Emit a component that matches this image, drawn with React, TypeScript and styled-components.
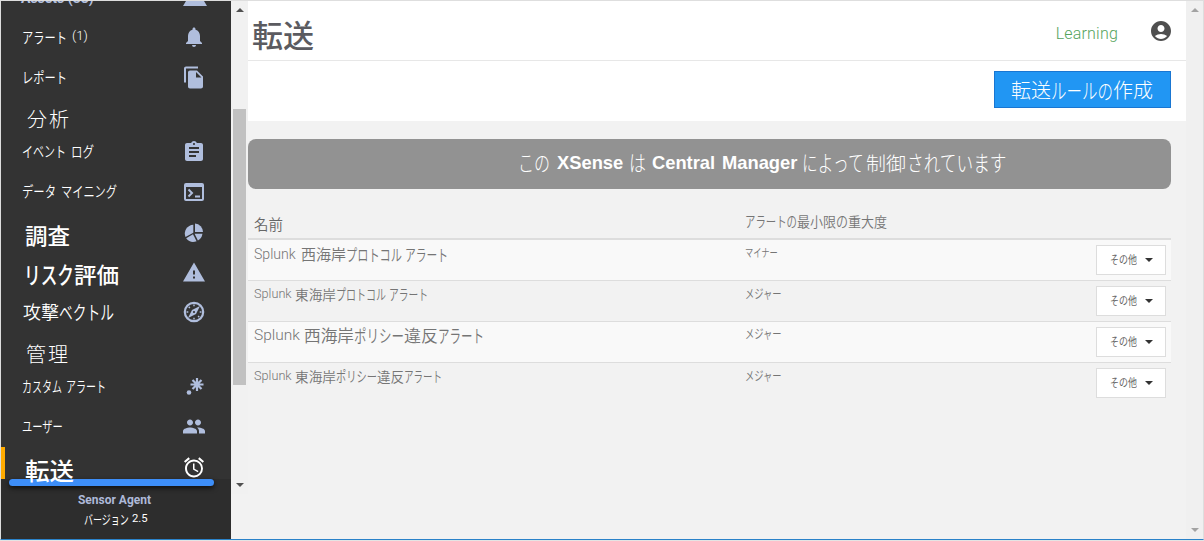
import React from "react";
import styled, { createGlobalStyle } from "styled-components";
import { MdNotifications, MdAssignment, MdWarning, MdPeople, MdAlarm, MdAccountCircle, MdFileCopy } from "react-icons/md";

const Global = createGlobalStyle`
  * { box-sizing: border-box; }
  body { margin: 0; background: #f2f2f2; font-family: "Liberation Sans", "Noto Sans CJK JP", sans-serif; }
`;

const Page = styled.div` height: 541px; padding-bottom: 1px; overflow: hidden; background: #e4e4e4; `;
const Frame = styled.div`
  display: flex; width: 1204px; height: 540px; overflow: hidden;
  border: 1px solid #dedede; border-bottom-color: #2a82c9;
  background: #f2f2f2;
`;

type Run = [text: string, width: number, gap?: number];

const Line = styled.span<{ $size: number; $weight?: number; $color?: string; $x?: number; $y?: number }>`
  display: flex; flex: none; white-space: nowrap;
  font-size: ${p => p.$size}px; line-height: ${p => Math.round(p.$size * 1.3)}px;
  font-weight: ${p => p.$weight ?? 300};
  color: ${p => p.$color ?? "inherit"};
  margin-left: ${p => p.$x ?? 0}px;
  padding-top: ${p => Math.max(0, p.$y ?? 0)}px;
  padding-bottom: ${p => Math.max(0, -(p.$y ?? 0))}px;
`;
const Cjk = styled.span<{ $w: number; $size: number; $count: number; $gap: number }>`
  display: block; width: ${p => p.$w}px; margin-left: ${p => p.$gap}px;
  font-family: "Noto Sans CJK JP", sans-serif; font-size: ${p => p.$size}px;
  transform: scaleX(${p => p.$w / (p.$count * p.$size)}); transform-origin: 0 50%;
`;
const Latin = styled.span<{ $w: number; $gap: number; $strong?: boolean }>`
  display: block; width: ${p => p.$w}px; margin-left: ${p => p.$gap}px; font-size: .94em;
  font-weight: ${p => (p.$strong ? 700 : "inherit")};
  font-family: ${p => (p.$strong ? '"Liberation Sans", sans-serif' : 'Roboto, "Liberation Sans", sans-serif')};
`;

const isLatin = (t: string) => /^[\x20-\x7e]+$/.test(t);
const isKana = (t: string) => /^[\u3040-\u30ff]+$/.test(t);

function Text({ runs, size, weight, color, x, y, strongLatin }: {
  runs: Run[]; size: number; weight?: number; color?: string; x?: number; y?: number; strongLatin?: boolean;
}) {
  return (
    <Line $size={size} $weight={weight} $color={color} $x={x} $y={y}>
      {runs.map(([t, w, gap = 0], i) =>
        isLatin(t)
          ? <Latin key={i} $w={w} $gap={gap} $strong={strongLatin}>{t}</Latin>
          : <Cjk key={i} $w={w} $gap={gap} $count={t.length} $size={isKana(t) ? size * 1.08 : size}>{t}</Cjk>
      )}
    </Line>
  );
}

const Sidebar = styled.aside`
  display: flex; flex-direction: column; width: 230px; background: #333; color: #fff;
`;
const Menu = styled.nav`
  position: relative; z-index: 1; height: 478px; display: flex; flex-direction: column;
`;
const Item = styled.div<{ $gap: number; $active?: boolean }>`
  flex: none; height: ${p => (p.$active ? 32 : 24)}px; margin-top: ${p => p.$gap}px;
  padding: 0 25px 0 ${p => (p.$active ? 17 : 21)}px;
  border-left: ${p => (p.$active ? "4px solid #ffab00" : "none")};
  display: flex; align-items: center; justify-content: space-between;
`;
const IconBox = styled.span<{ $active?: boolean }>`
  display: flex; width: 24px; height: 24px; align-items: center; justify-content: center;
  color: ${p => (p.$active ? "#fff" : "#b0bedd")};
  margin-top: ${p => (p.$active ? 8 : 0)}px;
`;
const Clipped = styled.div`
  flex: none; height: 5px; display: flex; align-items: flex-end; justify-content: space-between; padding: 0 24px 0 20px;
  color: #b0bedd; font: 700 14px/16px Roboto, sans-serif;
`;
const Footer = styled.footer`
  flex: 1; background: #2d2d2d; display: flex; flex-direction: column; align-items: center;
`;
const Highlight = styled.div`
  width: 205px; height: 7px; margin-right: 9px; border-radius: 4px; background: #3d8ef8;
  box-shadow: 0 2px 5px rgba(0,0,0,.7);
`;
const Agent = styled.div`
  margin-top: 7px; font: 700 12px/14px Roboto, sans-serif; color: #adb9d9; margin-right: 3px;
`;
const Version = styled.div` margin: 4px 0 0 1px; `;

const MenuScroll = styled.div`
  width: 17px; height: 493px; background: #f1f1f1; display: flex; flex-direction: column; align-items: center;
  padding: 7px 0 5px;
`;
const Thumb = styled.div` width: 13px; height: 276px; background: #c1c1c1; margin: 97px 0 98px; `;
const Arrow = styled.svg` display: block; flex: none; `;

const Main = styled.main` flex: 1; display: flex; flex-direction: column; min-width: 0; `;
const Header = styled.header`
  height: 60px; background: #fff; border-bottom: 1px solid #e7e7e7;
  display: flex; align-items: center; justify-content: space-between; padding: 0 13px 0 4px;
`;
const Account = styled.div` display: flex; align-items: center; gap: 31px; color: #4f4f4f; `;
const Mode = styled.span`
  font: 300 16px/20px Roboto, sans-serif; color: #54a35c; letter-spacing: .2px; padding-top: 6px; 
`;
const Toolbar = styled.div`
  height: 60px; background: #fff; display: flex; justify-content: flex-end; align-items: flex-start; padding: 10px 15px 0;
`;
const Create = styled.button`
  width: 177px; height: 37px; padding: 0 0 0 16px; border: 1px solid #1976d2; background: #2196f3; color: #fff;
  display: flex; align-items: center;
`;
const Banner = styled.div`
  margin: 18px 15px 0 0; height: 50px; border-radius: 8px; background: #929292; color: #fff;
  display: flex; align-items: center; padding-left: 270px;
`;
const Table = styled.div` margin-right: 15px; color: #757575; `;
const HeadRow = styled.div`
  height: 51px; border-bottom: 2px solid #ddd; display: grid; grid-template-columns: 491px 1fr; padding: 23px 0 0 6px;
`;
const Row = styled.div<{ $odd: boolean; $last: boolean }>`
  height: 41px; display: grid; grid-template-columns: 491px 1fr 70px; padding: 0 5px 0 6px;
  background: ${p => (p.$odd ? "#f9f9f9" : "transparent")};
  border-bottom: 1px solid ${p => (p.$last ? "transparent" : "#ddd")};
`;
const Cell = styled.div<{ $h: number }>` height: ${p => p.$h}px; display: flex; align-items: center; `;
const More = styled.button`
  width: 70px; height: 30px; margin-top: 5px; padding: 0 12px 0 13px; border: 1px solid #ddd; background: #fff; color: #666;
  display: flex; align-items: center; justify-content: space-between;
`;
const PageScroll = styled.div`
  width: 17px; background: #f0f0f0; padding: 7px 0; display: flex; flex-direction: column; align-items: center;
  justify-content: space-between;
`;

const Tri = ({ down, color }: { down?: boolean; color: string }) => (
  <Arrow width="8" height="4" viewBox="0 0 8 4" fill={color}>
    <path d={down ? "M0 0h8L4 4z" : "M0 4h8L4 0z"} />
  </Arrow>
);
const Terminal = () => (
  <svg width="20" height="18" viewBox="0 0 20 18" fill="none" stroke="currentColor">
    <rect x="1" y="1" width="18" height="16" rx="1" strokeWidth="2" />
    <path d="M1 2.500h18" strokeWidth="3" /><path d="M4.500 6.500 8 10l-3.500 3.500M11 13.400h5" strokeWidth="2" />
  </svg>
);
const Pie = () => (
  <svg width="20" height="20" viewBox="0 0 20 20" fill="currentColor">
    <path d="M11 .5a8.500 8.500 0 0 1 8 8.500h-8z" />
    <path d="M9.300 1.800v8L1.500 14A8.800 8.800 0 0 1 9.300 1.800z" />
    <path d="M9 11.300 12.600 18.300A9 9 0 0 1 2.200 15.200z" />
    <path d="M10.600 10.700h7.800A9 9 0 0 1 13.900 17.600z" />
  </svg>
);
const Compass = () => (
  <svg width="22" height="22" viewBox="0 0 22 22">
    <circle cx="11" cy="11" r="9.200" fill="none" stroke="currentColor" strokeWidth="2.200" />
    <path fill="currentColor" fillRule="evenodd" d="M17 5 13 13l-8 4L9 9zM11 9.900a1.100 1.100 0 1 0 0 2.200 1.100 1.100 0 0 0 0-2.200z" />
    <path stroke="currentColor" strokeWidth="1.400" d="M11 3.500V5.300M11 16.700v1.800M3.500 11h1.800M16.700 11h1.800M5.700 5.700l1.200 1.200M15.100 15.100l1.200 1.200" />
  </svg>
);
const Spark = () => (
  <svg width="22" height="20" viewBox="0 0 22 20" fill="none" stroke="currentColor" strokeWidth="2.200">
    <path d="M14 2v13M7.500 8.500h13M9.500 4l9 9M18.500 4l-9 9" />
    <circle cx="6" cy="16.500" r="2.300" fill="currentColor" stroke="none" />
  </svg>
);

interface Entry {
  gap: number; y: number; size: number; x?: number; weight?: number; runs: Run[]; icon?: React.ReactNode; active?: boolean;
}
const menu: Entry[] = [
  { gap: 19, y: -2, size: 14, weight: 350, runs: [["アラート", 45], ["(1)", 16, 5]], icon: <MdNotifications size={24} /> },
  { gap: 16, y: -2, size: 14, weight: 350, runs: [["レポート", 45]], icon: <MdFileCopy size={25} /> },
  { gap: 18, y: 0, size: 20, x: 5, runs: [["分", 20], ["析", 20, 2]] },
  { gap: 9, y: -4, size: 14, weight: 350, runs: [["イベント", 44], ["ログ", 23, 5]], icon: <MdAssignment size={24} /> },
  { gap: 16, y: -4, size: 14, weight: 350, runs: [["データ", 34], ["マイニング", 56, 5]], icon: <Terminal /> },
  { gap: 17, y: 3, size: 22, x: 3, weight: 500, runs: [["調査", 45]], icon: <Pie /> },
  { gap: 15, y: 2, size: 22, x: 2, weight: 500, runs: [["リスク", 50], ["評価", 45]], icon: <MdWarning size={25} /> },
  { gap: 16, y: -1, size: 18, x: 1, weight: 350, runs: [["攻撃", 36], ["ベクトル", 55]], icon: <Compass /> },
  { gap: 17, y: 2, size: 20, x: 4, runs: [["管", 20], ["理", 20, 2]] },
  { gap: 9, y: -3, size: 14, weight: 350, runs: [["カスタム", 40], ["アラート", 40, 4]], icon: <Spark /> },
  { gap: 16, y: -3, size: 14, weight: 350, runs: [["ユーザー", 41]], icon: <MdPeople size={25} /> },
  { gap: 9, y: 12, size: 24, x: 3, weight: 500, runs: [["転送", 49]], icon: <MdAlarm size={25} />, active: true },
];

interface Rule { h: number; size: number; runs: Run[]; severity: Run; severitySize: number; severityH: number }
const rules: Rule[] = [
  { h: 27, size: 15, runs: [["Splunk", 46], ["西海岸", 45, 1], ["プロトコル", 56], ["アラート", 43, 3]], severity: ["マイナー", 33], severitySize: 11, severityH: 23 },
  { h: 26, size: 13.5, runs: [["Splunk", 41], ["東海岸", 41], ["プロトコル", 50], ["アラート", 39, 3]], severity: ["メジャー", 37], severitySize: 12, severityH: 23 },
  { h: 27, size: 16.5, runs: [["Splunk", 50], ["西海岸", 50], ["ポリシー", 50], ["違反", 34], ["アラート", 46]], severity: ["メジャー", 37], severitySize: 12, severityH: 22 },
  { h: 25, size: 13.5, runs: [["Splunk", 41], ["東海岸", 41], ["ポリシー", 41], ["違反", 27], ["アラート", 38]], severity: ["メジャー", 37], severitySize: 12, severityH: 23 },
];

export default function App() {
  return (
    <Page>
      <Global />
      <Frame>
        <Sidebar>
          <Menu>
            <Clipped>
              <span>Assets (38)</span>
              <svg width="24" height="5" viewBox="0 0 24 5"><path fill="currentColor" d="M3 0h18l3 5H0z" /></svg>
            </Clipped>
            {menu.map((m, i) => (
              <Item key={i} $gap={m.gap} $active={m.active}>
                <Text runs={m.runs} size={m.size} weight={m.weight} x={m.x} y={m.y} />
                {m.icon && <IconBox $active={m.active}>{m.icon}</IconBox>}
              </Item>
            ))}
          </Menu>
          <Footer>
            <Highlight />
            <Agent>Sensor Agent</Agent>
            <Version><Text size={12} weight={400} runs={[["バージョン", 45], ["2.5", 17, 3]]} /></Version>
          </Footer>
        </Sidebar>
        <MenuScroll>
          <Tri color="#505050" /><Thumb /><Tri down color="#505050" />
        </MenuScroll>
        <Main>
          <Header>
            <Text size={31} weight={500} color="#5b5b60" y={7} runs={[["転送", 62]]} />
            <Account><Mode>Learning</Mode><MdAccountCircle size={24} /></Account>
          </Header>
          <Toolbar>
            <Create><Text size={20} runs={[["転送", 40], ["ルールの", 62], ["作成", 40]]} y={1} /></Create>
          </Toolbar>
          <Banner>
            <Text
              size={19.5} color="#fff" strongLatin y={-3}
              runs={[["この", 32], ["XSense", 66, 7], ["は", 17, 6], ["Central", 60, 6], ["Manager", 76, 10], ["によって", 63, 4], ["制御", 40, 1], ["されています", 100, 1]]}
            />
          </Banner>
          <Table>
            <HeadRow>
              <Text size={14.5} color="#666" weight={350} y={2} runs={[["名前", 29]]} />
              <Text size={13.5} weight={350} runs={[["アラートの", 52], ["最小限", 39], ["の", 12], ["重大度", 39]]} />
            </HeadRow>
            {rules.map((r, i) => (
              <Row key={i} $odd={i % 2 === 0} $last={i === rules.length - 1}>
                <Cell $h={r.h}><Text size={r.size} weight={350} runs={r.runs} /></Cell>
                <Cell $h={r.severityH}><Text size={r.severitySize} weight={350} runs={[r.severity]} /></Cell>
                <More><Text size={11} weight={400} runs={[["その他", 27]]} y={-3} /><Tri down color="#333" /></More>
              </Row>
            ))}
          </Table>
        </Main>
        <PageScroll><Tri color="#a3a3a3" /><Tri down color="#a3a3a3" /></PageScroll>
      </Frame>
    </Page>
  );
}
